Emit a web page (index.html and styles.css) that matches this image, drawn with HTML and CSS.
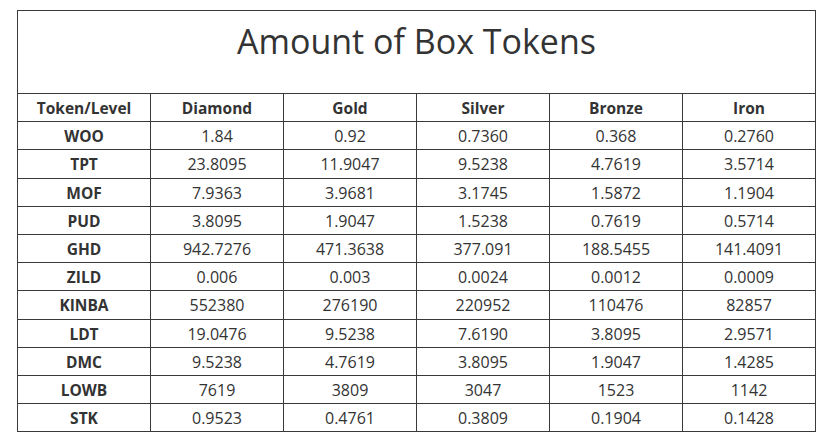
FILE: index.html
```html
<!DOCTYPE html>
<html>
<head>
<meta charset="utf-8">
<link rel="stylesheet" href="styles.css">
</head>
<body>
<div class="wrap">
<table class="tokens">
<thead>
<tr><th class="title" colspan="6"><h2>Amount of Box Tokens</h2></th></tr>
<tr class="head"><th>Token/Level</th><th>Diamond</th><th>Gold</th><th>Silver</th><th>Bronze</th><th>Iron</th></tr>
</thead>
<tbody>
<tr><th>WOO</th><td>1.84</td><td>0.92</td><td>0.7360</td><td>0.368</td><td>0.2760</td></tr>
<tr><th>TPT</th><td>23.8095</td><td>11.9047</td><td>9.5238</td><td>4.7619</td><td>3.5714</td></tr>
<tr><th>MOF</th><td>7.9363</td><td>3.9681</td><td>3.1745</td><td>1.5872</td><td>1.1904</td></tr>
<tr><th>PUD</th><td>3.8095</td><td>1.9047</td><td>1.5238</td><td>0.7619</td><td>0.5714</td></tr>
<tr><th>GHD</th><td>942.7276</td><td>471.3638</td><td>377.091</td><td>188.5455</td><td>141.4091</td></tr>
<tr><th>ZILD</th><td>0.006</td><td>0.003</td><td>0.0024</td><td>0.0012</td><td>0.0009</td></tr>
<tr><th>KINBA</th><td>552380</td><td>276190</td><td>220952</td><td>110476</td><td>82857</td></tr>
<tr><th>LDT</th><td>19.0476</td><td>9.5238</td><td>7.6190</td><td>3.8095</td><td>2.9571</td></tr>
<tr><th>DMC</th><td>9.5238</td><td>4.7619</td><td>3.8095</td><td>1.9047</td><td>1.4285</td></tr>
<tr><th>LOWB</th><td>7619</td><td>3809</td><td>3047</td><td>1523</td><td>1142</td></tr>
<tr><th>STK</th><td>0.9523</td><td>0.4761</td><td>0.3809</td><td>0.1904</td><td>0.1428</td></tr>
</tbody>
</table>
</div>
</body>
</html>
```
FILE: styles.css
```css
html, body {
  margin: 0;
  padding: 0;
  background: #ffffff;
}
body {
  font-family: "Open Sans", "Noto Sans", sans-serif;
  color: #333333;
}
.wrap {
  padding: 10px 0 0 17px;
}
.tokens {
  border-collapse: collapse;
  width: 799px;
  table-layout: fixed;
  border: 1px solid #3a3a3a;
}
.tokens th, .tokens td {
  border: 1px solid #3a3a3a;
  padding: 2px 0 1px;
  line-height: 24.2px;
  text-align: center;
  font-size: 16px;
}
.tokens th {
  font-weight: 700;
  font-size: 15.5px;
}
.tokens td {
  font-weight: 400;
}
.tokens th.title {
  height: 82px;
  padding: 0;
  vertical-align: top;
  font-weight: 400;
}
.title h2 {
  margin: 0;
  padding-top: 10px;
  font-size: 34px;
  line-height: 40px;
  font-weight: 400;
  color: #333333;
}
```
